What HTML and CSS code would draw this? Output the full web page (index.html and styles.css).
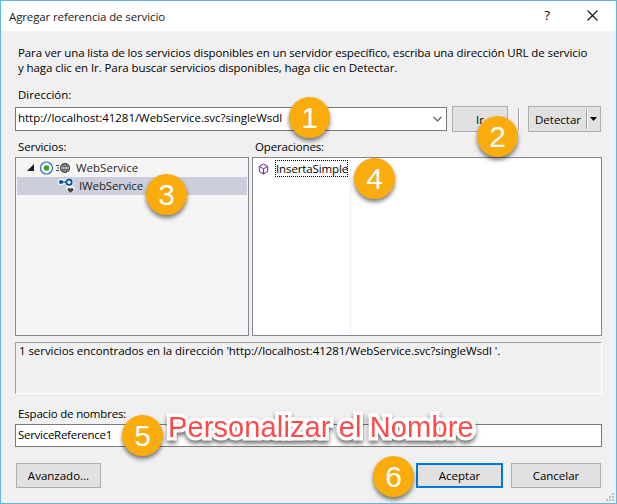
FILE: index.html
```html
<!DOCTYPE html>
<html lang="es">
<head>
<meta charset="utf-8">
<title>Agregar referencia de servicio</title>
<link rel="stylesheet" href="styles.css">
</head>
<body>
<div class="window">
  <header class="titlebar">
    <span class="title"><span class="t-title">Agregar referencia de servicio</span></span>
    <span class="help">?</span>
    <svg class="close" width="11" height="11" viewBox="0 0 11 11"><path d="M.5 .5L10.5 10.5M10.5 .5L.5 10.5" stroke="#111" stroke-width="1.1" fill="none"/></svg>
  </header>
  <main class="content">
    <p class="intro"><span class="t-intro1">Para ver una lista de los servicios disponibles en un servidor específico, escriba una dirección URL de servicio</span><br><span class="t-intro2">y haga clic en Ir. Para buscar servicios disponibles, haga clic en Detectar.</span></p>
    <div class="label label-address"><span class="t-dir">Dirección:</span></div>
    <div class="address-row">
      <div class="combo"><span class="t-url">http://localhost:41281/WebService.svc?singleWsdl</span>
        <svg width="9" height="6" viewBox="0 0 9 6"><path d="M.5 .8L4.5 4.8L8.5 .8" stroke="#555" stroke-width="1.2" fill="none"/></svg>
      </div>
      <div class="button go">Ir</div>
      <div class="separator"></div>
      <div class="button split"><span class="split-text"><span class="t-det">Detectar</span></span><span class="split-arrow"><svg width="7" height="4" viewBox="0 0 7 4"><path d="M0 0H7L3.5 4Z"/></svg></span></div>
    </div>
    <div class="lists">
      <div class="label"><span class="t-serv">Servicios:</span></div>
      <div class="label"><span class="t-oper">Operaciones:</span></div>
      <div class="list services">
        <div class="tree-row">
          <svg width="59" height="18" viewBox="0 0 59 18">
            <path d="M17 5V12H10Z" fill="#1e1e1e"/>
            <circle cx="29.5" cy="9" r="6" fill="#fff" stroke="#1e6c9e" stroke-width="1.1"/>
            <circle cx="29.5" cy="9" r="2.8" fill="#35a331"/>
            <path d="M39 6.5H42M40 9H42M39 11.5H42" stroke="#424242"/>
            <circle cx="48" cy="9" r="4.4" fill="#fff" stroke="#424242" stroke-width="1.3"/>
            <path d="M43.5 7.2H52.5M43.5 10.8H52.5M48 4.5V13.5" stroke="#424242" stroke-width=".9"/>
            <ellipse cx="48" cy="9" rx="2.2" ry="4.5" fill="none" stroke="#424242" stroke-width=".9"/>
          </svg><span class="t-web">WebService</span>
        </div>
        <div class="tree-row selected">
          <svg width="62" height="18" viewBox="0 0 62 18">
            <path d="M44.3 5H48" stroke="#f5f5f5" stroke-width="4"/>
            <circle cx="44" cy="5" r="3.3" fill="#f5f5f5"/><circle cx="52" cy="5.2" r="4.5" fill="#f5f5f5"/>
            <path d="M53.5 17L49.3 13V9.5H57.7V13Z" fill="#f5f5f5"/>
            <path d="M44 5H49" stroke="#00539c" stroke-width="1.3"/>
            <circle cx="44" cy="5" r="2.1" fill="#00539c"/>
            <circle cx="52" cy="5.2" r="2.7" fill="#f5f5f5" stroke="#00539c" stroke-width="1.8"/>
            <path d="M53.5 16L50.8 13.4C49.7 11.5 52.2 10.1 53.5 11.8C54.8 10.1 57.3 11.5 56.2 13.4Z" fill="#424242"/>
          </svg><span class="t-iweb">IWebService</span>
        </div>
      </div>
      <div class="list operations">
        <svg width="11" height="12" viewBox="0 0 11 12"><path d="M5.5 1L9.7 3.3V8.5L5.5 11L1.3 8.5V3.3ZM1.5 3.5L5.5 5.8L9.5 3.5M5.5 5.8V11" fill="#f5f0fa" stroke="#652d90" stroke-width="1"/></svg>
        <span class="focus"><span class="t-ins">InsertaSimple</span></span>
        <span class="column-line"></span>
      </div>
    </div>
    <div class="status"><span class="t-stat">1 servicios encontrados en la dirección 'http://localhost:41281/WebService.svc?singleWsdl '.</span></div>
    <div class="label label-ns"><span class="t-esp">Espacio de nombres:</span></div>
    <div class="input"><span class="t-ref">ServiceReference1</span></div>
    <footer class="footer">
      <div class="button advanced"><span class="t-av">Avanzado...</span></div>
      <div class="button ok"><span class="t-ac">Aceptar</span></div>
      <div class="button cancel"><span class="t-ca">Cancelar</span></div>
    </footer>
  </main>
  <svg class="grip" width="8" height="8" viewBox="0 0 8 8"><path d="M6 0h2v2h-2zM3 3h2v2h-2zM6 3h2v2h-2zM0 6h2v2h-2zM3 6h2v2h-2zM6 6h2v2h-2z" fill="#bfbfbf"/></svg>
  <span class="badge b1">1</span>
  <span class="badge b2">2</span>
  <span class="badge b3">3</span>
  <span class="badge b4">4</span>
  <span class="badge b5">5</span>
  <span class="badge b6">6</span>
  <span class="callout">Personalizar el Nombre</span>
</div>
</body>
</html>
```
FILE: styles.css
```css
* { box-sizing: border-box; }
body { margin: 0; }
.window {
  position: relative;
  width: 617px;
  height: 504px;
  border: 1px solid #62b5ea;
  background: #f0f0f0;
  font: 11.5px/15px "Open Sans", "Noto Sans", sans-serif;
  color: #000;
  overflow: hidden;
  white-space: nowrap;
}
svg { display: block; flex: none; }
.titlebar {
  display: flex;
  align-items: center;
  height: 30px;
  padding: 0 18px 0 8px;
  background: #fff;
  color: #222;
}
.close { margin-bottom: 2px; }
.title { flex: 1; }
.help { font-size: 13.5px; color: #000; margin-right: 37px; padding-bottom: 2px; }
.content { padding: 14px 14px 0; }
.intro { margin: 0; padding-left: 3px; }
.label { height: 15px; padding-left: 3px; }
.label-address { margin-top: 12px; }
.address-row { display: flex; align-items: center; height: 26px; margin-top: 4px; }
.combo {
  display: flex;
  align-items: center;
  justify-content: space-between;
  width: 432px;
  height: 24px;
  padding: 0 4px 0 2px;
  border: 1px solid #7a7a7a;
  background: #fff;
}
.combo span { padding-bottom: 3px; }
.button {
  display: flex;
  align-items: center;
  justify-content: center;
  height: 26px;
  border: 1px solid #adadad;
  background: #e1e1e1;
}
.go { width: 56px; margin-left: 5px; }
.separator { width: 2px; height: 22px; margin-left: 10px; border-left: 1px solid #a0a0a0; border-right: 1px solid #fff; }
.split { width: 73px; margin-left: 8px; }
.split-text { flex: 1; padding-left: 6px; }
.split-arrow { display: flex; align-items: center; height: 20px; width: 14px; padding-left: 3px; border-left: 1px solid #a0a0a0; box-shadow: inset 1px 0 #fff; }
.lists { display: grid; grid-template-columns: 234px 350px; column-gap: 3px; margin-top: 7px; }
.list { height: 179px; margin-top: 3px; border: 1px solid #828790; padding: 1px; }
.services { background: #f5f5f5; color: #1e1e1e; }
.tree-row { display: flex; align-items: center; height: 18px; }
.tree-row span { padding-bottom: 2px; }
.tree-row.selected { background: #cccedb; }
.operations { display: flex; align-items: flex-start; background: #fff; padding: 2px 0 0 5px; }
.operations svg { margin-top: 3px; }
.focus { display: flex; align-items: center; width: 73px; height: 17px; margin-left: 6px; border: 1px dotted #000; }
.column-line { width: 1px; height: 174px; margin-left: 2px; background: #e5f1fb; }
.status { height: 52px; margin-top: 6px; padding: 0 3px; border: 1px solid; border-color: #a0a0a0 #fff #fff #a0a0a0; }
.label-ns { margin-top: 12px; }
.input { display: flex; align-items: center; height: 23px; margin-top: 3px; padding: 0 2px 2px; border: 1px solid #7a7a7a; background: #fff; }
.footer { display: flex; margin-top: 16px; padding: 0 1px; }
.footer .button { height: 25px; }
.advanced { width: 85px; margin-right: auto; }
.ok.button { width: 87px; border: 2px solid #0078d7; }
.cancel { width: 90px; margin-left: 8px; }
.grip { position: absolute; right: 2px; bottom: 2px; }

/* Tracking per text run */
.t-title { letter-spacing: -.12px; }
.t-intro1 { letter-spacing: -.11px; }
.t-intro2 { letter-spacing: -.08px; }
.t-url { letter-spacing: -.04px; }
.t-serv, .t-oper, .t-esp { letter-spacing: -.17px; }
.t-iweb, .t-ins { letter-spacing: -.12px; }
.t-ref { letter-spacing: -.28px; }
.t-stat { letter-spacing: -.065px; }

.badge {
  position: absolute;
  width: 41px;
  height: 41px;
  border-radius: 50%;
  background: #f9ac0c;
  color: #fff;
  font: 30px/41px "Liberation Sans", sans-serif;
  text-align: center;
  box-shadow: 0 3px 4px rgba(0, 0, 0, .5);
}
.b1 { left: 288px; top: 96px; }
.b2 { left: 476px; top: 115px; }
.b3 { left: 145px; top: 173px; }
.b4 { left: 353px; top: 157px; }
.b5 { left: 121px; top: 414px; }
.b6 { left: 372px; top: 455px; }
.callout {
  position: absolute;
  left: 167px;
  top: 409px;
  font: 29px/34px "Liberation Sans", sans-serif;
  letter-spacing: .12px;
  color: #ff4a4a;
  -webkit-text-stroke: 7px #fff;
  paint-order: stroke fill;
  stroke-linejoin: round;
  filter: drop-shadow(0 3px 2px rgba(0, 0, 0, .55));
}
```
